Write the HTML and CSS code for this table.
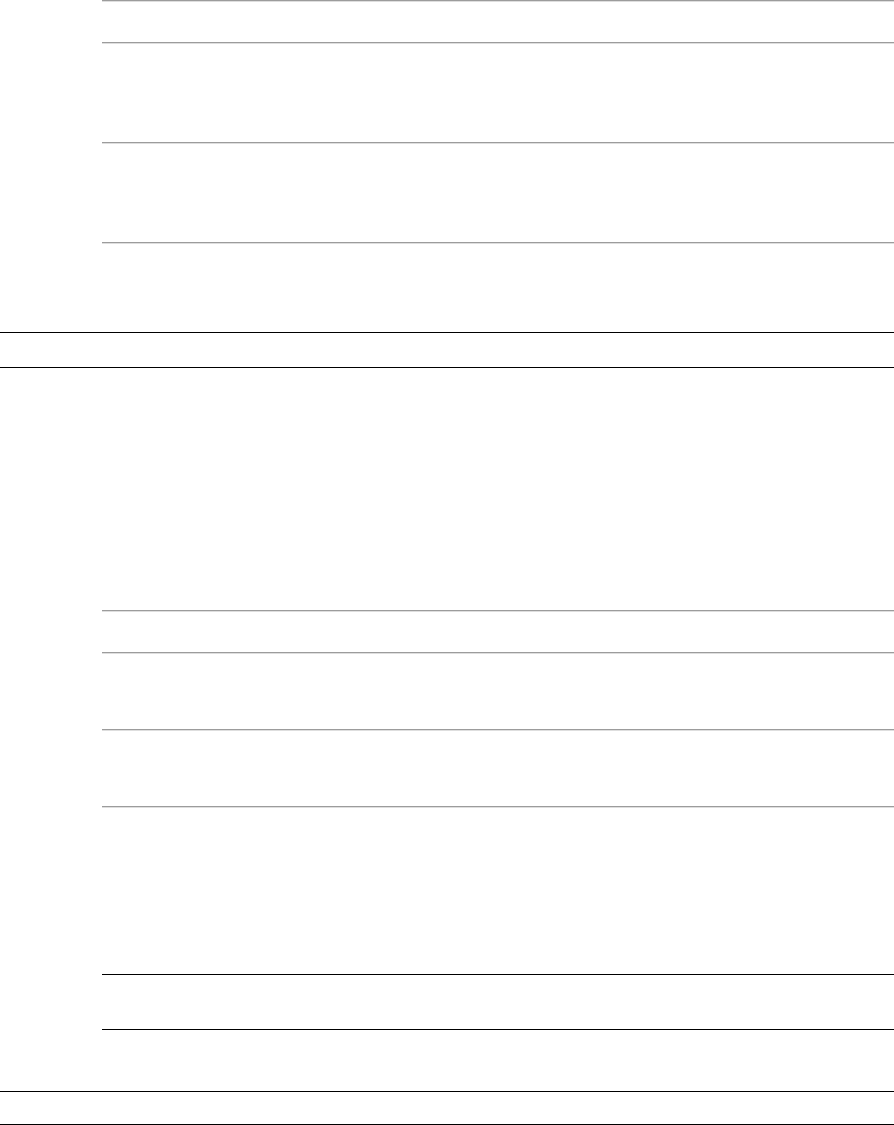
FILE: index.html
```html
<!DOCTYPE html>
<html lang="en">

<head>
    <meta charset="UTF-8">
    <meta name="viewport" content="width=device-width, initial-scale=1.0">
    <title>Rules</title>
    <link rel="stylesheet" href="styles.css">
</head>

<body>
    <div class="page">
        <div class="group">
            <hr class="rule">
            <hr class="rule row-short">
            <hr class="rule row-tall">
            <hr class="rule row-tall">
        </div>

        <div class="band"></div>

        <div class="group group-low">
            <hr class="rule">
            <hr class="rule row-short">
            <hr class="rule row-mid">
            <hr class="rule row-mid">
            <div class="line line-first"></div>
            <div class="line line-second"></div>
        </div>

        <div class="band band-last"></div>
    </div>
</body>

</html>
```

FILE: styles.css
```css
* {
    box-sizing: border-box;
    margin: 0;
    padding: 0;
}

body {
    background: #ffffff;
    font-family: 'Liberation Sans', Arial, sans-serif;
}

.page {
    width: 100%;
    height: 1125px;
    overflow: hidden;
}

.group {
    padding-left: 102px;
}

.group-low {
    margin-top: 242px;
}

.rule {
    display: block;
    height: 2px;
    border: none;
    border-top: 1px solid #9c9c9c;
    border-bottom: 1px solid #dedede;
}

.row-short {
    margin-top: 40px;
}

.row-mid {
    margin-top: 75px;
}

.row-tall {
    margin-top: 98px;
}

.line {
    height: 1px;
    background: #000000;
}

.line-first {
    margin-top: 166px;
}

.line-second {
    margin-top: 54px;
}

.band {
    margin-top: 88px;
    height: 36px;
    border-top: 1px solid #000000;
    border-bottom: 1px solid #000000;
}

.band-last {
    margin-top: 61px;
    height: 34px;
}
```
